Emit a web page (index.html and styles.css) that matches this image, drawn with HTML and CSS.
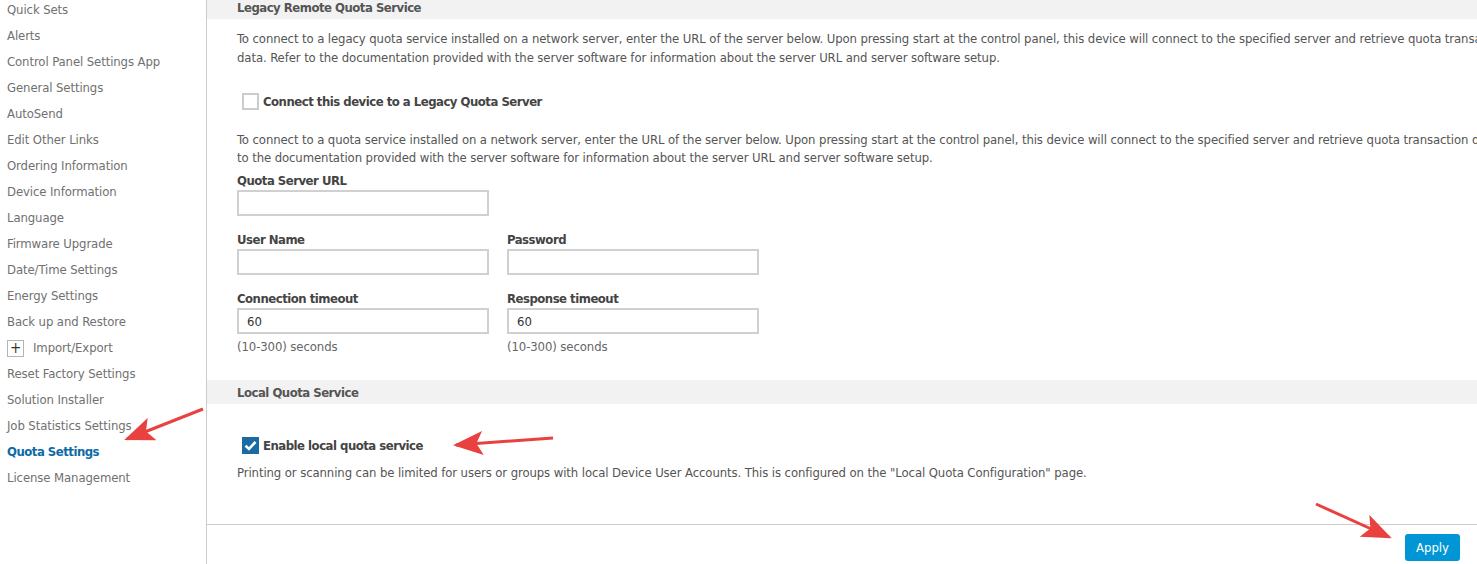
FILE: index.html
```html
<!DOCTYPE html>
<html>
    <head>
        <link rel="stylesheet" href="styles.css">
    </head>
    <body>
        <div class="page">
            <ul class="nav">
                <li>Quick Sets</li>
                <li>Alerts</li>
                <li>Control Panel Settings App</li>
                <li>General Settings</li>
                <li>AutoSend</li>
                <li>Edit Other Links</li>
                <li>Ordering Information</li>
                <li>Device Information</li>
                <li>Language</li>
                <li>Firmware Upgrade</li>
                <li>Date/Time Settings</li>
                <li>Energy Settings</li>
                <li>Back up and Restore</li>
                <li class="group"><span class="expand">+</span>Import/Export</li>
                <li>Reset Factory Settings</li>
                <li>Solution Installer</li>
                <li>Job Statistics Settings</li>
                <li class="active">Quota Settings</li>
                <li>License Management</li>
            </ul>

            <div class="main">
                <div class="content">
                    <h2 class="section first">Legacy Remote Quota Service</h2>
                    <p class="text">To connect to a legacy quota service installed on a network server, enter the URL of the server below. Upon pressing start at the control panel, this device will connect to the specified server and retrieve quota transaction<br>data. Refer to the documentation provided with the server software for information about the server URL and server software setup.</p>

                    <label class="check">
                        <span class="box"></span>
                        Connect this device to a Legacy Quota Server
                    </label>

                    <p class="text second">To connect to a quota service installed on a network server, enter the URL of the server below. Upon pressing start at the control panel, this device will connect to the specified server and retrieve quota transaction data. Refer<br>to the documentation provided with the server software for information about the server URL and server software setup.</p>

                    <div class="fields">
                        <div class="field">
                            <label>Quota Server URL</label>
                            <input type="text">
                        </div>
                        <div></div>
                        <div class="field">
                            <label>User Name</label>
                            <input type="text">
                        </div>
                        <div class="field">
                            <label>Password</label>
                            <input type="password">
                        </div>
                        <div class="field">
                            <label>Connection timeout</label>
                            <input type="text" value="60">
                            <span class="hint">(10-300) seconds</span>
                        </div>
                        <div class="field">
                            <label>Response timeout</label>
                            <input type="text" value="60">
                            <span class="hint">(10-300) seconds</span>
                        </div>
                    </div>

                    <h2 class="section local">Local Quota Service</h2>

                    <label class="check enabled">
                        <span class="box checked">
                            <svg viewBox="0 0 17 17" width="17" height="17"><path d="M3.5 8.8 L7 12 L13.5 5" fill="none" stroke="#fff" stroke-width="2.6"/></svg>
                        </span>
                        Enable local quota service
                    </label>
                    <p class="text note">Printing or scanning can be limited for users or groups with local Device User Accounts. This is configured on the "Local Quota Configuration" page.</p>
                </div>

                <div class="footer">
                    <button type="button" class="apply">Apply</button>
                </div>
            </div>
        </div>

        <svg class="marks" width="1477" height="564">
            <defs>
                <marker id="head" markerWidth="10" markerHeight="8" refX="9" refY="4" orient="auto" markerUnits="strokeWidth">
                    <path d="M0 0 L10 4 L0 8 L2.2 4 Z" fill="#e8413f"/>
                </marker>
            </defs>
            <line x1="203" y1="409" x2="127" y2="439" stroke="#e8413f" stroke-width="3" marker-end="url(#head)"/>
            <line x1="553" y1="438" x2="456" y2="445" stroke="#e8413f" stroke-width="3" marker-end="url(#head)"/>
            <line x1="1316" y1="504" x2="1389" y2="537" stroke="#e8413f" stroke-width="3" marker-end="url(#head)"/>
        </svg>
    </body>
</html>
```

FILE: styles.css
```css
/* BASE */
body {
    margin: 0;
    overflow: hidden;
    font-family: "DejaVu Sans Condensed", "Liberation Sans", sans-serif;
    font-size: 13px;
    letter-spacing: -0.1px;
    color: #555;
    background: #fff;
}

.page {
    display: flex;
    flex-flow: row nowrap;
    height: 564px;
}

/* SIDEBAR */
.nav {
    list-style: none;
    margin: -3px 0 0;
    padding: 0 0 0 7px;
    width: 199px;
    flex: 0 0 199px;
    border-right: 1px solid #ccc;
    height: 567px;
}

.nav li {
    line-height: 26px;
    color: #707070;
    white-space: nowrap;
}

.nav .group {
    display: flex;
    align-items: center;
}

.nav .expand {
    display: inline-flex;
    align-items: center;
    justify-content: center;
    width: 15px;
    height: 15px;
    border: 1px solid #b5b5b5;
    margin-right: 9px;
    font-size: 15px;
    line-height: 1;
    color: #333;
}

.nav .active {
    color: #0b6aa6;
    font-weight: bold;
    letter-spacing: -0.5px;
}

/* MAIN */
.main {
    flex: 1 0 0;
    display: flex;
    flex-flow: column;
    overflow: hidden;
}

.content {
    flex: 1 0 0;
}

.section {
    box-sizing: border-box;
    margin: 0;
    padding: 2px 0 0 30px;
    height: 24px;
    line-height: 22px;
    font-size: 13px;
    font-weight: bold;
    letter-spacing: -0.5px;
    color: #555;
    background: #f2f2f2;
    white-space: nowrap;
}

.section.first {
    margin-top: -5px;
}

.section.local {
    margin-top: 24px;
}

.text {
    margin: 10px 0 0 30px;
    line-height: 19px;
    white-space: nowrap;
    color: #555;
}

.text.second {
    margin-top: 21px;
    line-height: 18px;
}

.text.note {
    margin-top: 9px;
}

.check {
    display: flex;
    align-items: center;
    margin: 26px 0 0 35px;
    font-weight: bold;
    letter-spacing: -0.5px;
    color: #444;
}

.check.enabled {
    margin-top: 33px;
}

.box {
    display: inline-block;
    box-sizing: border-box;
    width: 17px;
    height: 17px;
    margin-right: 4px;
    border: 2px solid #ccc;
    background: #fff;
}

.box.checked {
    border: none;
    background: #1a6ba3;
}

.box svg {
    display: block;
}

/* FIELDS */
.fields {
    display: grid;
    grid-template-columns: 252px 252px;
    column-gap: 18px;
    row-gap: 14px;
    margin: 4px 0 0 30px;
}

.field {
    display: flex;
    flex-flow: column;
}

.field label {
    line-height: 19px;
    font-weight: bold;
    letter-spacing: -0.5px;
    color: #444;
}

.field input {
    box-sizing: border-box;
    width: 252px;
    height: 26px;
    margin: 0;
    padding: 0 8px;
    border: 2px solid #d0d0d0;
    font-family: inherit;
    font-size: 13px;
    color: #333;
}

.hint {
    margin-top: 3px;
    line-height: 19px;
    color: #666;
}

/* FOOTER */
.footer {
    display: flex;
    justify-content: flex-end;
    height: 40px;
    border-top: 1px solid #ccc;
    padding: 9px 17px 0 0;
    box-sizing: border-box;
}

.apply {
    width: 55px;
    height: 27px;
    border: none;
    border-radius: 3px;
    background: #0096d6;
    color: #fff;
    font-family: inherit;
    font-size: 13px;
}

/* ANNOTATIONS */
.marks {
    position: absolute;
    left: 0;
    top: 0;
    pointer-events: none;
}
```
